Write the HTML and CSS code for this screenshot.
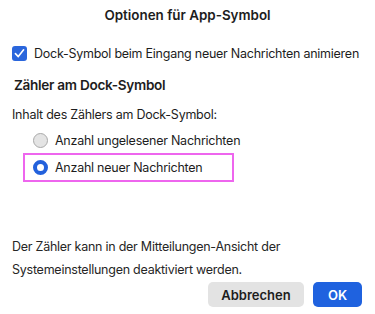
FILE: index.html
```html
<!DOCTYPE html>
<html lang="de">
<head>
  <meta charset="UTF-8" />
  <title>Optionen für App-Symbol</title>
  <link rel="stylesheet" href="styles.css">
</head>
<body>
  <div class="dialog">
    <h1 class="title">Optionen für App-Symbol</h1>

    <label class="check-row">
      <span class="checkbox">
        <svg width="15" height="15" viewBox="0 0 15 15"><path d="M3.4 7.6 L6.3 10.6 L11.6 3.8" fill="none" stroke="#fff" stroke-width="1.6" stroke-linecap="round" stroke-linejoin="round"/></svg>
      </span>
      <span>Dock-Symbol beim Eingang neuer Nachrichten animieren</span>
    </label>

    <h2 class="section">Zähler am Dock-Symbol</h2>
    <p class="hint">Inhalt des Zählers am Dock-Symbol:</p>

    <div class="radio-list">
      <div class="radio-row">
        <span class="radio"></span>
        <span>Anzahl ungelesener Nachrichten</span>
      </div>
      <div class="radio-row selected">
        <span class="radio on"></span>
        <span>Anzahl neuer Nachrichten</span>
      </div>
    </div>

    <p class="note">Der Zähler kann in der Mitteilungen-Ansicht der<br>Systemeinstellungen deaktiviert werden.</p>

    <div class="buttons">
      <button class="button cancel">Abbrechen</button>
      <button class="button ok">OK</button>
    </div>
  </div>
</body>
</html>
```

FILE: styles.css
```css
* {
  box-sizing: border-box;
  margin: 0;
  padding: 0;
}

body {
  font-family: 'Inter', 'Liberation Sans', sans-serif;
  background: #ffffff;
  color: #1d1d1d;
  font-size: 12.5px;
  letter-spacing: -0.25px;
  white-space: nowrap;
}

.dialog {
  width: 375px;
  height: 314px;
  padding: 0 12px;
}

.title {
  font-size: 13.4px;
  font-weight: 600;
  letter-spacing: 0;
  text-align: center;
  line-height: 16px;
  padding-top: 7px;
}

.check-row {
  display: flex;
  align-items: center;
  gap: 7px;
  margin-top: 22px;
  height: 16px;
}

.checkbox {
  flex-shrink: 0;
  width: 15px;
  height: 15px;
  border-radius: 3px;
  background: #2a66dc;
  display: flex;
}

.section {
  font-size: 13.6px;
  font-weight: 600;
  letter-spacing: -0.3px;
  line-height: 18px;
  margin: 15px 0 0 2px;
}

.hint {
  line-height: 16px;
  margin-top: 13px;
}

.radio-list {
  margin: 9px 0 0 11px;
  width: 211px;
}

.radio-row {
  display: flex;
  align-items: center;
  gap: 7px;
  height: 16px;
  padding-left: 10px;
}

.radio-row.selected {
  height: 29px;
  margin-top: 5px;
  border: 2px solid #ee66ee;
  padding-left: 8px;
}

.radio {
  flex-shrink: 0;
  width: 15px;
  height: 15px;
  border-radius: 50%;
  background: #e4e4e4;
  border: 1px solid #a9a9a9;
}

.radio.on {
  background: #fff;
  border: 4px solid #2361dc;
}

.note {
  line-height: 23px;
  margin-top: 53px;
  color: #262626;
}

.buttons {
  display: flex;
  justify-content: flex-end;
  gap: 9px;
  margin-top: 1px;
  padding-right: 1px;
}

.button {
  font-family: inherit;
  font-size: 13px;
  font-weight: 600;
  letter-spacing: 0;
  height: 25px;
  border: none;
  border-radius: 5px;
}

.cancel {
  width: 96px;
  background: #e3e3e3;
  color: #1d1d1d;
}

.ok {
  width: 49px;
  background: #1f62df;
  color: #fff;
}
```
